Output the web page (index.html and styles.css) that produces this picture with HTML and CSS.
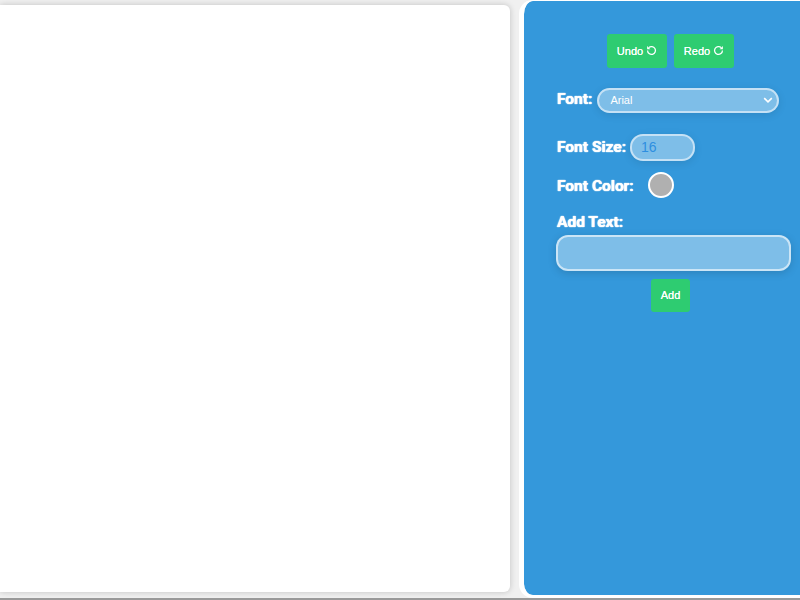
FILE: index.html
```html
<!DOCTYPE html>
<html>
  <head>
    <meta charset="utf-8">
    <link rel="stylesheet" href="styles.css">
  </head>
  <body>
    <div id="main">
      <div id="canvas-area"></div>
      <div id="panel">
        <div class="history">
          <button class="btn">Undo
            <svg class="icon" viewBox="0 0 12 12"><path d="M3 2.9A4.3 4.3 0 1 1 1.7 6"/><path class="solid" d="M1.2 1V4.6H4.8Z"/></svg>
          </button>
          <button class="btn">Redo
            <svg class="icon" viewBox="0 0 12 12"><path d="M9 2.9A4.3 4.3 0 1 0 10.3 6"/><path class="solid" d="M10.8 1V4.6H7.2Z"/></svg>
          </button>
        </div>
        <div class="row font-row">
          <label>Font:</label>
          <div class="select">
            <span>Arial</span>
            <svg class="chevron" viewBox="0 0 10 6"><path d="M1.2 1.2 5 4.8 8.8 1.2"/></svg>
          </div>
        </div>
        <div class="row size-row">
          <label>Font Size:</label>
          <input class="size" type="number" value="16">
        </div>
        <div class="row color-row">
          <label>Font Color:</label>
          <div class="swatch"></div>
        </div>
        <label class="text-label">Add Text:</label>
        <input class="text-input" type="text">
        <div class="add-wrap">
          <button class="btn add">Add</button>
        </div>
      </div>
    </div>
  </body>
</html>
```

FILE: styles.css
```css
html, body {
  width: 100%;
  height: 100%;
  margin: 0;
  padding: 0;
  overflow: hidden;
  background: #f0f0f0;
  font-family: "Liberation Sans", Arial, sans-serif;
}

#main {
  display: flex;
  height: 598px;
  border-bottom: 2px solid #999;
}

#canvas-area {
  flex: 0 0 510px;
  height: 587px;
  margin-top: 5px;
  background: #fff;
  border-radius: 0 6px 6px 0;
  box-shadow: 0 0 6px rgba(0, 0, 0, .2);
}

#panel {
  flex: 0 0 281px;
  box-sizing: border-box;
  height: 598px;
  margin-left: 9px;
  padding: 33px 0 0 32px;
  background: #3498db;
  background-clip: padding-box;
  border-top: 1px solid #fff;
  border-left: 5px solid #fff;
  border-bottom: 3px solid #fff;
  border-radius: 14px 0 0 14px;
  color: #fff;
}

.history {
  display: flex;
  gap: 7px;
  padding-left: 51px;
  margin-bottom: 20px;
}

.btn {
  display: flex;
  align-items: center;
  justify-content: center;
  gap: 3px;
  width: 60px;
  height: 34px;
  padding: 0 0 1px;
  border: 0;
  border-radius: 3px;
  background: #2ecc71;
  color: #fff;
  font-family: "Liberation Sans", Arial, sans-serif;
  font-size: 11px;
  text-shadow: 0 0 .5px #fff;
}

.icon {
  width: 11px;
  height: 11px;
  fill: none;
  stroke: #fff;
  stroke-width: 1.4;
}

.icon .solid {
  fill: #fff;
  stroke: none;
}

.row {
  display: flex;
  align-items: center;
}

label {
  padding-left: 1px;
  font-family: Roboto, "Liberation Sans", sans-serif;
  font-size: 15.5px;
  font-weight: bold;
  text-shadow: 0 0 1px #fff, 0 0 1px #fff;
}

.font-row {
  gap: 5px;
  margin-bottom: 21px;
}

.font-row label {
  position: relative;
  top: -2px;
}

.select {
  display: flex;
  align-items: center;
  justify-content: space-between;
  box-sizing: border-box;
  width: 182px;
  height: 25px;
  padding: 0 4px 1px 11px;
  font-size: 11px;
  border: 2px solid rgba(255, 255, 255, .55);
  border-radius: 13px;
  background: rgba(255, 255, 255, .37);
  box-shadow: 0 2px 8px rgba(0, 0, 0, .1);
}

.chevron {
  width: 10px;
  height: 6px;
  fill: none;
  stroke: #fff;
  stroke-width: 1.6;
}

.size-row {
  gap: 4px;
  margin-bottom: 11px;
}

.size-row label {
  position: relative;
  top: -1px;
}

.size {
  box-sizing: border-box;
  width: 65px;
  height: 27px;
  padding: 0 9px 1px;
  font-family: "Liberation Sans", Arial, sans-serif;
  font-size: 14px;
  color: #2e8fe0;
  border: 2px solid rgba(255, 255, 255, .55);
  border-radius: 13px;
  background: rgba(255, 255, 255, .37);
  box-shadow: 0 2px 8px rgba(0, 0, 0, .1);
  outline: none;
}

.size::-webkit-inner-spin-button {
  display: none;
}

.color-row {
  gap: 14px;
  margin-bottom: 15px;
}

.color-row label {
  position: relative;
  top: 1px;
}

.swatch {
  box-sizing: border-box;
  width: 26px;
  height: 26px;
  border-radius: 50%;
  background: #b0b0b0;
  border: 2px solid #fff;
}

.text-label {
  display: block;
  margin-bottom: 4px;
}

.text-input {
  display: block;
  box-sizing: border-box;
  width: 235px;
  height: 36px;
  border: 2px solid rgba(255, 255, 255, .6);
  border-radius: 12px;
  background: rgba(255, 255, 255, .37);
  box-shadow: 0 2px 8px rgba(0, 0, 0, .15);
  outline: none;
}

.add-wrap {
  display: flex;
  padding-left: 95px;
  margin-top: 8px;
}

.add {
  width: 39px;
  height: 33px;
}
```
